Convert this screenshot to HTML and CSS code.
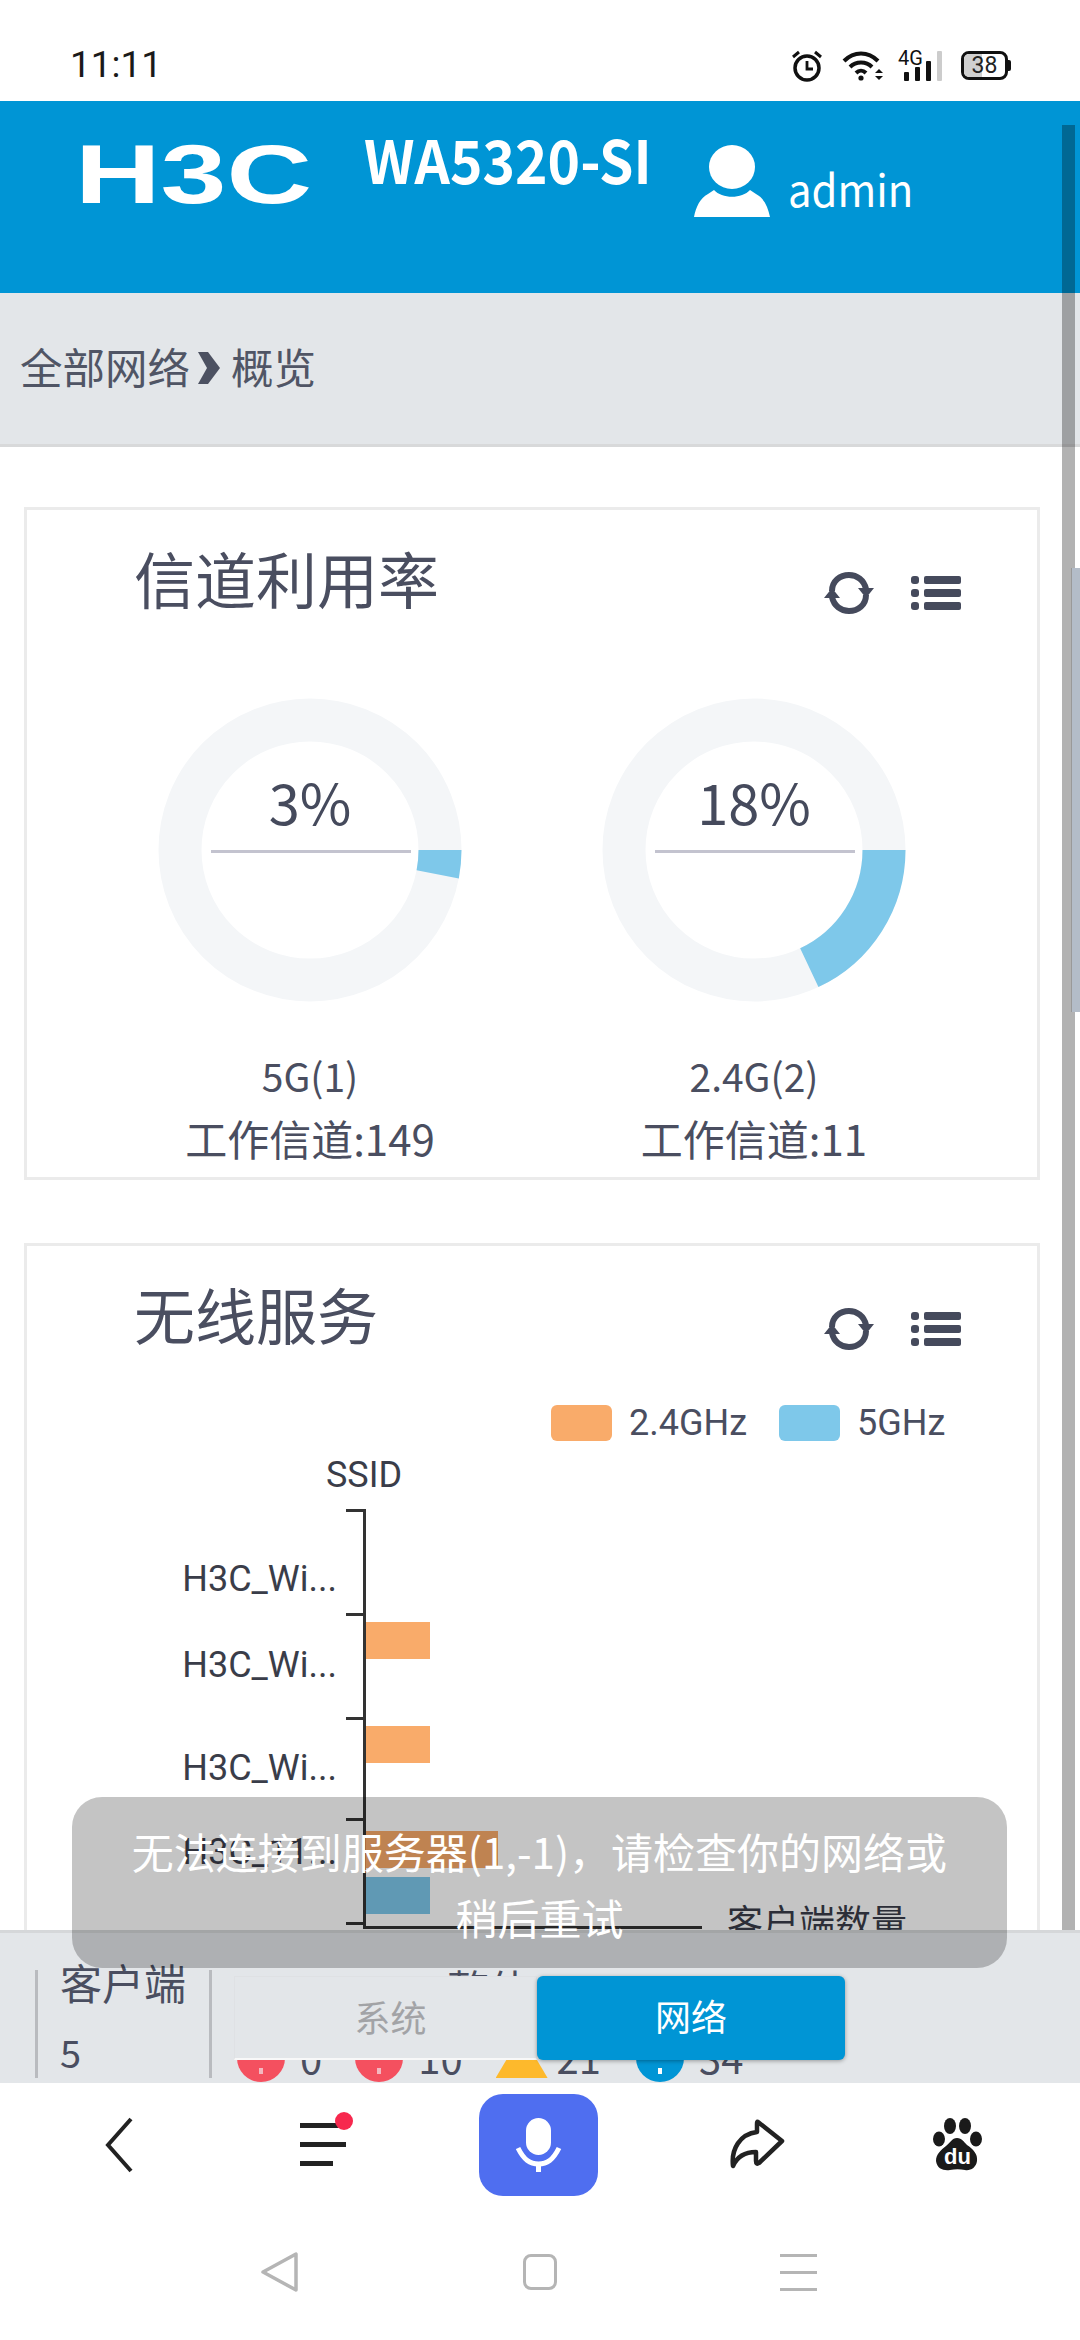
FILE: index.html
```html
<!DOCTYPE html>
<html>
<head>
    <title>WA5320-SI</title>
    <link rel="stylesheet" href="styles.css">
</head>
<body>
    <div class="phone">
        <div class="status-bar">
            <span class="time">11:11</span>
            <div class="status-icons">
                <svg class="ic-alarm" width="32" height="32" viewBox="0 0 32 32" fill="none" stroke="#111" stroke-width="3.500">
                    <circle cx="16" cy="18" r="12"/>
                    <path d="M16 11v8h6" stroke-width="2.800"/>
                    <path d="M2 7l6-5M30 7l-6-5" stroke-width="3"/>
                </svg>
                <svg class="ic-wifi" width="42" height="30" viewBox="0 0 42 30" fill="none" stroke="#111" stroke-width="4">
                    <path d="M2 10C12 0 26 0 36 10"/>
                    <path d="M8 16C14 10 24 10 30 16"/>
                    <path d="M14 22c3-3 7-3 10 0"/>
                    <circle cx="19" cy="27" r="2.600" fill="#111" stroke="none"/>
                    <path d="M33 22l4-4 4 4zM33 25l4 4 4-4z" fill="#111" stroke="none"/>
                </svg>
                <div class="ic-signal">
                    <span class="net">4G</span>
                    <i class="sig sig1"></i><i class="sig sig2"></i><i class="sig sig3"></i><i class="sig sig4"></i>
                </div>
                <div class="battery"><span class="level"></span><span class="num">38</span></div>
            </div>
        </div>

        <div class="page">
            <header class="top">
                <svg class="logo" width="237" height="64" viewBox="0 0 237 64">
                    <text x="0" y="60" textLength="237" lengthAdjust="spacingAndGlyphs" fill="#fff">H3C</text>
                </svg>
                <span class="model">WA5320-SI</span>
                <svg class="user-ic" width="76" height="72" viewBox="0 0 76 72" fill="#fff">
                    <ellipse cx="38" cy="22" rx="23" ry="22"/>
                    <path d="M0 72C2 62 6 53 14 49l6-4c8 9 28 9 36 0l6 4c8 4 12 13 14 23z"/>
                </svg>
                <span class="user">admin</span>
            </header>

            <div class="crumb">
                <span>全部网络</span>
                <svg class="crumb-arrow" width="22" height="34" viewBox="0 0 22 34"><path d="M0 1h10l12 16-12 16H0l9-16z" fill="#4c5161"/></svg>
                <span>概览</span>
            </div>

            <section class="card card-channel">
                <div class="card-head">
                    <h2>信道利用率</h2>
                    <div class="tools">
                        <svg width="50" height="46" viewBox="0 0 50 46" fill="none" stroke="#454a5c" stroke-width="6">
                            <path d="M8 21C8 11 16 5 25 5c8 0 15 5 17 14"/>
                            <path d="M42 25C42 35 34 41 25 41c-8 0-15-5-17-14"/>
                            <path d="M34 18h16l-8 10zM0 28h16L8 18z" fill="#454a5c" stroke="none"/>
                        </svg>
                        <svg width="50" height="34" viewBox="0 0 50 34" fill="#454a5c">
                            <rect x="0" y="0" width="8" height="8" rx="3"/><rect x="13" y="0" width="37" height="8" rx="2"/>
                            <rect x="0" y="13" width="8" height="8" rx="3"/><rect x="13" y="13" width="37" height="8" rx="2"/>
                            <rect x="0" y="26" width="8" height="8" rx="3"/><rect x="13" y="26" width="37" height="8" rx="2"/>
                        </svg>
                    </div>
                </div>
                <div class="donuts">
                    <div class="donut-item">
                        <div class="donut">
                            <svg width="304" height="304" viewBox="0 0 304 304" fill="none">
                                <circle cx="152" cy="152" r="130" stroke="#f4f6f8" stroke-width="43"/>
                                <circle cx="152" cy="152" r="130" stroke="#7ec8ea" stroke-width="43" stroke-dasharray="24.500 792.300"/>
                            </svg>
                            <div class="donut-val">3%</div>
                            <div class="donut-line"></div>
                        </div>
                        <div class="donut-name">5G(1)</div>
                        <div class="donut-sub">工作信道:149</div>
                    </div>
                    <div class="donut-item">
                        <div class="donut">
                            <svg width="304" height="304" viewBox="0 0 304 304" fill="none">
                                <circle cx="152" cy="152" r="130" stroke="#f4f6f8" stroke-width="43"/>
                                <circle cx="152" cy="152" r="130" stroke="#7ec8ea" stroke-width="43" stroke-dasharray="147 669.800"/>
                            </svg>
                            <div class="donut-val">18%</div>
                            <div class="donut-line"></div>
                        </div>
                        <div class="donut-name">2.4G(2)</div>
                        <div class="donut-sub">工作信道:11</div>
                    </div>
                </div>
            </section>

            <section class="card card-wireless">
                <div class="card-head">
                    <h2>无线服务</h2>
                    <div class="tools">
                        <svg width="50" height="46" viewBox="0 0 50 46" fill="none" stroke="#454a5c" stroke-width="6">
                            <path d="M8 21C8 11 16 5 25 5c8 0 15 5 17 14"/>
                            <path d="M42 25C42 35 34 41 25 41c-8 0-15-5-17-14"/>
                            <path d="M34 18h16l-8 10zM0 28h16L8 18z" fill="#454a5c" stroke="none"/>
                        </svg>
                        <svg width="50" height="34" viewBox="0 0 50 34" fill="#454a5c">
                            <rect x="0" y="0" width="8" height="8" rx="3"/><rect x="13" y="0" width="37" height="8" rx="2"/>
                            <rect x="0" y="13" width="8" height="8" rx="3"/><rect x="13" y="13" width="37" height="8" rx="2"/>
                            <rect x="0" y="26" width="8" height="8" rx="3"/><rect x="13" y="26" width="37" height="8" rx="2"/>
                        </svg>
                    </div>
                </div>
                <div class="chart">
                    <div class="legend">
                        <i class="swatch orange"></i><span>2.4GHz</span>
                        <i class="swatch blue"></i><span>5GHz</span>
                    </div>
                    <span class="y-name">SSID</span>
                    <i class="axis-y"></i>
                    <i class="axis-x"></i>
                    <i class="tick t1"></i><i class="tick t2"></i><i class="tick t3"></i><i class="tick t4"></i><i class="tick t5"></i>
                    <span class="ssid s1">H3C_Wi...</span>
                    <span class="ssid s2">H3C_Wi...</span>
                    <span class="ssid s3">H3C_Wi...</span>
                    <span class="ssid s4">H3C_11...</span>
                    <i class="bar orange b1"></i>
                    <i class="bar orange b2"></i>
                    <i class="bar orange b3"></i>
                    <i class="bar blue b4"></i>
                    <span class="x-name">客户端数量</span>
                </div>
            </section>

            <div class="scroll-outer"></div>
            <div class="scroll-inner"></div>

            <div class="bottom-panel">
                <div class="stat-clients">
                    <div class="stat-title">客户端</div>
                    <div class="stat-num">5</div>
                </div>
                <div class="stat-all">
                    <div class="stat-title all-title">整体</div>
                    <div class="alarms">
                        <i class="dot red"></i><span>0</span>
                        <i class="dot red"></i><span>10</span>
                        <i class="tri"></i><span class="after-tri">21</span>
                        <i class="dot info"></i><span>34</span>
                    </div>
                </div>
                <div class="tabs">
                    <div class="tab">系统</div>
                    <div class="tab on">网络</div>
                </div>
            </div>

            <div class="toast">无法连接到服务器(1,-1)，请检查你的网络或<br>稍后重试</div>
        </div>

        <div class="browser-bar">
            <svg width="30" height="56" viewBox="0 0 30 56" fill="none" stroke="#222" stroke-width="4"><path d="M27 2L4 28l23 26"/></svg>
            <div class="menu">
                <i></i><i></i><i></i><b></b>
            </div>
            <div class="mic">
                <svg width="46" height="54" viewBox="0 0 46 54" fill="none" stroke="#fff" stroke-width="5">
                    <rect x="10" y="0" width="25" height="37" rx="12.500" fill="#fff" stroke="none"/>
                    <path d="M2 30c6 12 12 16 20.500 16S37 42 43 30"/>
                    <path d="M22.500 45v9"/>
                </svg>
            </div>
            <svg class="share" width="58" height="52" viewBox="0 0 58 52" fill="none" stroke="#222" stroke-width="4.500" stroke-linejoin="round" stroke-linecap="round"><path d="M30 3l24 19-23 22q-3 2-3-2v-9C16 33 9 38 5 47 3 30 12 15 29 13V5q0-3 1-2z"/></svg>
            <svg class="paw" width="52" height="54" viewBox="0 0 52 54">
                <ellipse cx="17" cy="8" rx="6" ry="8"/><ellipse cx="32" cy="8" rx="6" ry="8"/>
                <ellipse cx="6" cy="21" rx="6" ry="7.500"/><ellipse cx="43" cy="21" rx="6" ry="7.500"/>
                <path d="M24 20c5 0 7 4 10 7 6 4 11 9 10 16-1 7-7 10-12 9-5-1-10-1-15 0-6 1-13-1-14-9 0-7 5-11 10-15 4-3 6-8 11-8z"/>
                <text x="24.500" y="46" text-anchor="middle" fill="#fff">du</text>
            </svg>
        </div>

        <div class="nav-bar">
            <svg width="38" height="40" viewBox="0 0 38 40" fill="none" stroke="#b5b5b5" stroke-width="3.500" stroke-linejoin="round"><path d="M35 2v36L2 20z"/></svg>
            <i class="nav-square"></i>
            <div class="nav-lines"><i></i><i></i><i></i></div>
        </div>
    </div>
</body>
</html>
```

FILE: styles.css
```css
* {
    box-sizing: border-box;
}
html, body {
    margin: 0;
    padding: 0;
}
body {
    width: 1080px;
    height: 2340px;
    overflow: hidden;
    background: #fff;
    font-family: "Noto Sans CJK SC", "Noto Sans", sans-serif;
    color: #4a4e60;
}
i {
    display: block;
}
.phone {
    display: flex;
    flex-direction: column;
    height: 2340px;
}

/* status bar */
.status-bar {
    height: 101px;
    flex: none;
    display: flex;
    align-items: center;
    justify-content: space-between;
    padding: 30px 72px 0 70px;
    background: #fff;
}
.time {
    font: 37px/40px "Roboto", sans-serif;
    color: #1a1a1a;
    margin-top: -2px;
}
.status-icons {
    display: flex;
    align-items: center;
}
.ic-alarm {
    margin-right: 19px;
}
.ic-wifi {
    margin-right: 14px;
}
.ic-signal {
    position: relative;
    width: 44px;
    height: 30px;
    margin-right: 19px;
}
.net {
    position: absolute;
    left: 0;
    top: -5px;
    font: 20px "Roboto", sans-serif;
    color: #111;
}
.sig {
    position: absolute;
    bottom: 0;
    width: 5px;
    background: #111;
    border-radius: 1px;
}
.sig1 { left: 6px; height: 9px; }
.sig2 { left: 17px; height: 14px; }
.sig3 { left: 28px; height: 20px; }
.sig4 { left: 39px; height: 30px; background: #ccc; }
.battery {
    position: relative;
    width: 47px;
    height: 29px;
    border: 3px solid #111;
    border-radius: 8px;
}
.battery::after {
    content: "";
    position: absolute;
    right: -6px;
    top: 6px;
    width: 3px;
    height: 11px;
    background: #111;
    border-radius: 0 2px 2px 0;
}
.level {
    position: absolute;
    left: 0;
    top: 0;
    bottom: 0;
    width: 18px;
    background: #d0d0d0;
    border-radius: 5px 0 0 5px;
}
.num {
    position: relative;
    display: block;
    text-align: center;
    font: 23px/23px "Roboto", sans-serif;
    color: #222;
}

/* web page */
.page {
    position: relative;
    height: 1982px;
    flex: none;
    overflow: hidden;
    background: #fff;
}
.top {
    height: 192px;
    background: #0095d5;
    position: relative;
    display: flex;
    align-items: flex-start;
    padding: 0 0 0 75px;
}
.logo {
    margin-top: 42px;
    overflow: visible;
}
.logo text {
    font: bold 84px "Liberation Sans", sans-serif;
}
.model {
    margin: 21px 0 0 52px;
    font: bold 60px/72px "Noto Sans CJK SC", sans-serif;
    color: #fff;
    width: 330px;
    transform: scaleX(0.92);
    transform-origin: left;
}
.user-ic {
    margin: 44px 0 0 0;
}
.user {
    margin: 55px 0 0 18px;
    font: 44px/64px "Noto Sans CJK SC", sans-serif;
    color: #fff;
    transform: scaleX(0.95);
    transform-origin: left;
}
.crumb {
    height: 154px;
    padding: 0 0 6px 20px;
    display: flex;
    align-items: center;
    gap: 8px;
    background: #e3e6e9;
    border-bottom: 3px solid #d8d9da;
    font-size: 42.500px;
    color: #505565;
}
.crumb-arrow {
    margin: 4px 3px 0 0;
}
.card {
    position: relative;
    margin: 60px 40px 0 24px;
    border: 3px solid #ebebeb;
    background: #fff;
}
.card-channel {
    height: 673px;
}
.card-wireless {
    margin-top: 63px;
    height: 760px;
}
.card-head {
    display: flex;
    justify-content: space-between;
    padding: 22px 76px 0 107px;
}
.card-head h2 {
    margin: 0;
    font-size: 61px;
    font-weight: 400;
    line-height: 92px;
    color: #4a4e60;
}
.tools {
    display: flex;
    gap: 37px;
    align-items: center;
    padding-top: 30px;
    height: 92px;
}

/* donuts */
.donuts {
    display: flex;
    padding: 74px 0 0 131px;
    gap: 140px;
}
.donut-item {
    width: 304px;
    text-align: center;
}
.donut {
    position: relative;
    width: 304px;
    height: 304px;
}
.donut svg {
    display: block;
}
.donut-val {
    position: absolute;
    left: 0;
    right: 0;
    top: 61px;
    font-size: 56px;
    line-height: 84px;
    color: #454a5c;
}
.donut-line {
    position: absolute;
    left: 53px;
    width: 200px;
    top: 152px;
    height: 3px;
    background: #c3c3cf;
}
.donut-name {
    margin-top: 45px;
    font-size: 39px;
    line-height: 56px;
}
.donut-sub {
    margin: 6px -60px 0;
    font-size: 42px;
    line-height: 58px;
}

/* bar chart */
.chart {
    position: absolute;
    left: -27px;
    top: -1246px;
    width: 1080px;
    height: 2000px;
    font-family: "Roboto", sans-serif;
    color: #3a3d49;
}
.legend {
    position: absolute;
    left: 551px;
    top: 1405px;
    display: flex;
    align-items: center;
    font-size: 36px;
    line-height: 36px;
    color: #4a4e60;
}
.swatch {
    width: 61px;
    height: 36px;
    border-radius: 6px;
    margin-right: 17px;
}
.legend span {
    margin-right: 32px;
}
.orange {
    background: #f9ab6a;
}
.blue {
    background: #7ec8ea;
}
.y-name {
    position: absolute;
    left: 264px;
    width: 200px;
    top: 1453px;
    text-align: center;
    font-size: 36px;
    line-height: 44px;
}
.axis-y {
    position: absolute;
    left: 363px;
    top: 1509px;
    width: 3px;
    height: 420px;
    background: #333;
}
.axis-x {
    position: absolute;
    left: 363px;
    top: 1926px;
    width: 339px;
    height: 3px;
    background: #333;
}
.tick {
    position: absolute;
    left: 346px;
    width: 17px;
    height: 3px;
    background: #333;
}
.t1 { top: 1509px; }
.t2 { top: 1613px; }
.t3 { top: 1717px; }
.t4 { top: 1818px; }
.t5 { top: 1922px; }
.ssid {
    position: absolute;
    left: 137px;
    width: 200px;
    text-align: right;
    font-size: 36px;
    line-height: 44px;
}
.s1 { top: 1557px; }
.s2 { top: 1643px; }
.s3 { top: 1746px; }
.s4 { top: 1830px; }
.bar {
    position: absolute;
    left: 366px;
    height: 37px;
    width: 64px;
}
.b1 { top: 1622px; }
.b2 { top: 1726px; }
.b3 { top: 1831px; width: 132px; }
.b4 { top: 1877px; }
.x-name {
    position: absolute;
    left: 727px;
    top: 1898px;
    font-size: 36px;
    line-height: 44px;
    font-family: "Noto Sans CJK SC", sans-serif;
}

/* scrollbars */
.scroll-outer {
    position: absolute;
    right: 5px;
    top: 24px;
    width: 13px;
    height: 1920px;
    background: rgba(0, 0, 0, 0.3);
}
.scroll-inner {
    position: absolute;
    right: 0;
    top: 467px;
    width: 9px;
    height: 444px;
    background: #b3bcc8;
    border-left: 1px solid #999;
}

/* fixed panel at the bottom */
.bottom-panel {
    position: absolute;
    left: 0;
    right: 0;
    bottom: 0;
    height: 153px;
    overflow: hidden;
    background: #e3e6e9;
    border-top: 3px solid #d5d7d9;
}
.stat-clients {
    position: absolute;
    left: 35px;
    top: 37px;
    width: 177px;
    height: 108px;
    padding-left: 22px;
    border-left: 3px solid #b9bbbf;
    border-right: 3px solid #b9bbbf;
}
.stat-title {
    margin-top: -18px;
    font-size: 42px;
    line-height: 60px;
    color: #4a4e60;
}
.stat-num {
    margin-top: 12px;
    font-size: 38px;
    line-height: 56px;
}
.stat-all {
    position: absolute;
    left: 234px;
    top: 37px;
    width: 620px;
}
.all-title {
    text-align: center;
    width: 510px;
    margin-top: -12px;
}
.alarms {
    position: absolute;
    left: 3px;
    top: 64px;
    display: flex;
    align-items: flex-start;
    font-size: 40px;
    line-height: 48px;
}
.alarms span {
    margin: -6px 33px 0 15px;
    padding-top: 5px;
}
.alarms .after-tri {
    margin-left: 9px;
    margin-right: 35px;
}
.dot {
    position: relative;
    width: 48px;
    height: 48px;
    border-radius: 50%;
}
.dot::after {
    content: "";
    position: absolute;
    left: 22px;
    top: 34px;
    width: 4px;
    height: 6px;
    background: #f3b8c0;
}
.red {
    background: #f4505f;
}
.info {
    background: #0095d5;
}
.info::after {
    background: #fff;
}
.tri {
    width: 52px;
    height: 44px;
    background: #fdb92c;
    clip-path: polygon(50% 0, 100% 100%, 0 100%);
}
.tabs {
    position: absolute;
    left: 234px;
    top: 43px;
    width: 611px;
    height: 84px;
    display: flex;
}
.tab {
    width: 303px;
    padding-left: 10px;
    text-align: center;
    font-size: 36px;
    line-height: 78px;
    color: #a2a3a6;
    background: #e3e6e9;
    border: 1px solid #dfe1e4;
    border-bottom: 2px solid #f8f8f8;
}
.tab.on {
    width: 308px;
    padding-left: 0;
    color: #fff;
    background: #0095d5;
    border: 0;
    border-radius: 6px;
    box-shadow: 0 1px 4px rgba(0, 0, 0, 0.35);
}

.toast {
    position: absolute;
    left: 72px;
    top: 1696px;
    width: 935px;
    height: 171px;
    padding-top: 21px;
    border-radius: 30px;
    background: rgba(0, 0, 0, 0.23);
    color: #fff;
    text-align: center;
    font-size: 42px;
    line-height: 66px;
}

/* browser toolbar */
.browser-bar {
    height: 120px;
    flex: none;
    display: flex;
    align-items: center;
    position: relative;
    padding-top: 4px;
}
.browser-bar > svg:first-child {
    margin-left: 104px;
}
.menu {
    position: relative;
    width: 46px;
    height: 44px;
    margin-left: 166px;
}
.menu i {
    position: absolute;
    left: 0;
    height: 5px;
    background: #222;
}
.menu i:nth-child(1) { top: 0; width: 40px; }
.menu i:nth-child(2) { top: 19px; width: 46px; }
.menu i:nth-child(3) { top: 38px; width: 33px; }
.menu b {
    position: absolute;
    left: 35px;
    top: -11px;
    width: 18px;
    height: 18px;
    border-radius: 50%;
    background: #f7284e;
}
.mic {
    width: 119px;
    height: 102px;
    margin-left: 133px;
    border-radius: 24px;
    background: #4f6ef0;
    display: flex;
    align-items: center;
    justify-content: center;
}
.share {
    margin-left: 130px;
}
.paw {
    margin-left: 147px;
    fill: #1a1a1a;
}
.paw text {
    font: bold 22px "Liberation Sans", sans-serif;
}

/* android nav */
.nav-bar {
    flex: 1;
    display: flex;
    align-items: center;
    padding: 0 0 0 261px;
}
.nav-square {
    width: 34px;
    height: 36px;
    margin-left: 224px;
    border: 3px solid #b5b5b5;
    border-radius: 8px;
}
.nav-lines {
    width: 37px;
    margin-left: 223px;
    padding-top: 2px;
}
.nav-lines i {
    height: 3px;
    margin: 14px 0;
    background: #b5b5b5;
}
```
